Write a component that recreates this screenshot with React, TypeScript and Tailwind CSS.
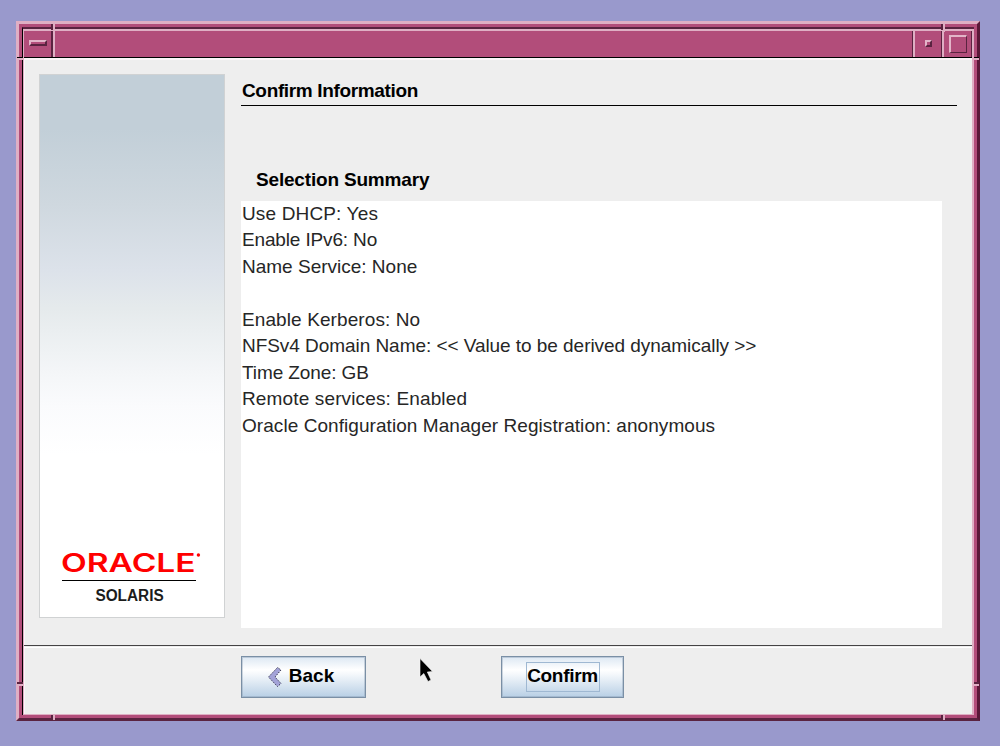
import type { ReactNode } from "react";

const summary: { text: string; tracking: string }[] = [
  { text: "Use DHCP: Yes", tracking: "tracking-[0.15px]" },
  { text: "Enable IPv6: No", tracking: "tracking-[-0.15px]" },
  { text: "Name Service: None", tracking: "tracking-[0px]" },
  { text: "", tracking: "" },
  { text: "Enable Kerberos: No", tracking: "tracking-[0.1px]" },
  {
    text: "NFSv4 Domain Name: << Value to be derived dynamically >>",
    tracking: "tracking-[-0.05px]",
  },
  { text: "Time Zone: GB", tracking: "tracking-[-0.1px]" },
  { text: "Remote services: Enabled", tracking: "tracking-[0.14px]" },
  {
    text: "Oracle Configuration Manager Registration: anonymous",
    tracking: "tracking-[0.06px]",
  },
];

function Notch({ className }: { className: string }) {
  return <span className={`absolute ${className}`} />;
}

function TitleBar() {
  return (
    <div className="flex h-[27px] shrink-0 border-b border-black bg-[#b24d7a]">
      <div className="flex w-[27px] items-center justify-center pb-[2px]">
        <div className="h-[6px] w-[18px] border-2 border-t-[#e3b5c9] border-l-[#e3b5c9] border-r-[#5a2340] border-b-[#5a2340]" />
      </div>
      <div className="w-[2px] bg-[#5a2340]" />
      <div className="flex-1 border-l-2 border-[#dfafc4]" />
      <div className="w-px bg-[#5a2340]" />
      <div className="flex w-[28px] items-center justify-center border-l-2 border-[#dfafc4] pb-px">
        <div className="size-[7px] border-2 border-t-[#e3b5c9] border-l-[#e3b5c9] border-r-[#5a2340] border-b-[#5a2340]" />
      </div>
      <div className="w-px bg-[#5a2340]" />
      <div className="flex w-[29px] items-center justify-center border-l-2 border-[#dfafc4]">
        <div className="size-[18px] border-t-2 border-r border-b border-l-2 border-t-[#e3b5c9] border-l-[#e3b5c9] border-r-[#5a2340] border-b-[#5a2340]" />
      </div>
      <div className="w-px bg-[#5a2340]" />
    </div>
  );
}

function Banner() {
  return (
    <aside className="flex h-[544px] w-[186px] shrink-0 flex-col items-center justify-end border border-[#d0d2d3] bg-[linear-gradient(180deg,#c2cfd8_0%,#c2cfd8_10%,#cfd8df_24%,#dce2ea_36%,#e5eaec_43%,#f4f6f8_55%,#fafbfd_61%,#ffffff_70%)] pb-[12px]">
      <svg width="142" height="38" className="-mb-[4px] block overflow-visible">
        <text
          x="0"
          y="28.8"
          textLength="108.5"
          lengthAdjust="spacingAndGlyphs"
          transform="scale(1.24 1)"
          className="fill-[#ff0000] font-['Inter',sans-serif] text-[25px] leading-[25px] font-semibold"
        >
          ORACLE
        </text>
        <circle cx="137.4" cy="12" r="1.7" fill="#ff0000" />
      </svg>
      <div className="mt-[3px] mr-[6px] h-px w-[134px] bg-black" />
      <div className="mt-[6px] mr-[4px] h-[18px] scale-x-[0.96] text-[16px] leading-[18px] font-bold text-[#1c1c1c]">
        SOLARIS
      </div>
    </aside>
  );
}

function Button({ className, children }: { className: string; children: ReactNode }) {
  return (
    <button
      className={`flex h-[42px] items-center justify-center border border-[#7a8fa5] bg-[linear-gradient(180deg,#dde8f3_0%,#ffffff_32%,#f6f9fc_42%,#b8cfe5_100%)] text-[19px] leading-[22px] font-bold text-black shadow-[inset_0_0_0_1px_rgba(122,143,165,0.35)] ${className}`}
    >
      {children}
    </button>
  );
}

export default function App() {
  return (
    <div className="relative h-[746px] w-[1000px] overflow-hidden bg-[#9999cc] pt-[21px] pl-[16px] font-['Liberation_Sans',Arial,sans-serif] text-black">
      <div className="relative h-[700px] w-[964px] border-t-[3px] border-r-[3px] border-b-[3px] border-l-[3px] border-t-[#dfafc4] border-r-[#5a1838] border-b-[#5a2340] border-l-[#dfafc4] bg-[#b24d7a]">
        <div className="flex h-full flex-col p-[3px]">
          <div className="flex min-h-0 flex-1 flex-col border-t-2 border-l border-t-[#5a2340] border-l-black">
            <div className="flex min-h-0 flex-1 flex-col border-t-2 border-r-2 border-b border-l border-[#dfafc4]">
              <TitleBar />
              <main className="flex min-h-0 flex-1 flex-col border-t-2 border-l border-[#fbf5f8] bg-[#eeeeee]">
                <div className="flex h-[585px] shrink-0 pt-[14px] pl-[14px]">
                  <Banner />
                  <section className="ml-[16px] flex w-[716px] flex-col">
                    <h1 className="pt-[6px] pl-px text-[19px] leading-[22px] font-bold tracking-[-0.35px]">
                      Confirm Information
                    </h1>
                    <div className="mt-[3px] h-px shrink-0 bg-black" />
                    <h2 className="mt-[63px] pl-[15px] text-[19px] leading-[22px] font-bold tracking-[-0.18px]">
                      Selection Summary
                    </h2>
                    <div className="mt-[10px] h-[427px] w-[701px] shrink-0 bg-white pl-px text-[19px] text-[#262626]">
                      {summary.map((line, i) => (
                        <p key={i} className={`h-[26.45px] leading-[25.6px] whitespace-pre ${line.tracking}`}>
                          {line.text}
                        </p>
                      ))}
                    </div>
                  </section>
                </div>
                <div className="-ml-px h-[3px] shrink-0 border-t border-b border-t-[#454345] border-b-white" />
                <div className="flex pt-[8px] pl-[216px]">
                  <Button className="w-[125px]">
                    <svg width="16" height="22" viewBox="0 0 16 22" className="-mt-px mr-[6px] -ml-[4px]">
                      <path
                        d="M10.5 1.5 L1.5 11 L10.5 20.5 L14 17.5 L8 11 L14 4 Z"
                        fill="#a3a3d8"
                        stroke="#34344e"
                        strokeWidth="1"
                        strokeDasharray="1.5 1.3"
                      />
                    </svg>
                    <span className="pr-[2px] pb-[2px]">Back</span>
                  </Button>
                  <Button className="ml-[135px] w-[123px]">
                    <span className="h-[30px] w-[74px] border border-[#9fb8d2] pt-[2px] text-center tracking-[-0.3px] whitespace-nowrap">
                      <span className="-mx-1">Confirm</span>
                    </span>
                  </Button>
                </div>
              </main>
            </div>
          </div>
        </div>
        <Notch className="top-0 left-[32px] h-[6px] w-[2px] bg-[#5a2340]" />
        <Notch className="top-0 left-[34px] h-[8px] w-[2px] bg-[#dfafc4]" />
        <Notch className="top-0 right-[34px] h-[6px] w-[2px] bg-[#5a2340]" />
        <Notch className="top-0 right-[32px] h-[8px] w-[2px] bg-[#dfafc4]" />
        <Notch className="bottom-[-2px] left-[32px] h-[5px] w-[2px] bg-[#5a2340]" />
        <Notch className="bottom-[-2px] left-[34px] h-[5px] w-[2px] bg-[#dfafc4]" />
        <Notch className="right-[34px] bottom-[-2px] h-[5px] w-[2px] bg-[#5a2340]" />
        <Notch className="right-[32px] bottom-[-2px] h-[5px] w-[2px] bg-[#dfafc4]" />
        <Notch className="top-[33px] left-[-2px] h-px w-[6px] bg-black" />
        <Notch className="top-[34px] left-[-2px] h-[2px] w-[7px] bg-[#dfafc4]" />
        <Notch className="top-[33px] right-[-2px] h-px w-[5px] bg-black" />
        <Notch className="top-[34px] right-[-2px] h-[2px] w-[6px] bg-[#dfafc4]" />
        <Notch className="bottom-[34px] left-[-2px] h-[2px] w-[6px] bg-[#5a2340]" />
        <Notch className="bottom-[32px] left-[-2px] h-[2px] w-[6px] bg-[#dfafc4]" />
        <Notch className="right-[-2px] bottom-[34px] h-[2px] w-[5px] bg-[#5a2340]" />
        <Notch className="right-[-2px] bottom-[32px] h-[2px] w-[5px] bg-[#dfafc4]" />
      </div>
      <svg width="16" height="26" viewBox="0 0 16 26" className="absolute top-[657px] left-[419px]">
        <path
          d="M1 1.5 L1 20 L4.8 16.5 L9 24.5 L12 23 L8.3 15 L13.5 14.5 Z"
          fill="#000"
          stroke="#f6f6f6"
          strokeWidth="0.6"
        />
      </svg>
    </div>
  );
}
